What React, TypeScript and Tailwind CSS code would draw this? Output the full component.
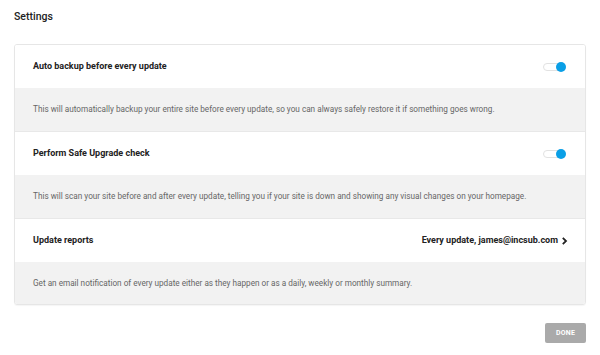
import React from 'react';

interface SettingRow {
    title: string;
    description: string;
    control: 'toggle' | 'link';
    value?: string;
}

const rows: SettingRow[] = [
    {
        title: 'Auto backup before every update',
        description: 'This will automatically backup your entire site before every update, so you can always safely restore it if something goes wrong.',
        control: 'toggle'
    },
    {
        title: 'Perform Safe Upgrade check',
        description: 'This will scan your site before and after every update, telling you if your site is down and showing any visual changes on your homepage.',
        control: 'toggle'
    },
    {
        title: 'Update reports',
        description: 'Get an email notification of every update either as they happen or as a daily, weekly or monthly summary.',
        control: 'link',
        value: 'Every update, james@incsub.com'
    }
];

const Toggle = () => (
    <div className="relative w-[23px] h-[11px] flex items-center">
        <div className="w-[20px] h-[8px] rounded-full bg-white border border-[#e2e2e2]" />
        <div className="absolute right-0 top-[0.5px] w-[10px] h-[10px] rounded-full bg-[#0a9fe6]" />
    </div>
);

export default function App() {
    return (
        <div className="w-[600px] h-[355px] bg-white font-['Roboto',sans-serif] px-[14px] pt-[10px]">
            <h1 className="text-[10.5px] font-medium text-[#222] leading-[14px] pb-[20px]">Settings</h1>
            <div className="border border-[#e6e6e6] rounded-[3px] shadow-[0_1px_1px_rgba(0,0,0,0.04)] overflow-hidden">
                {rows.map((row, idx) => (
                    <div key={idx} className={idx > 0 ? 'border-t border-[#e8e8e8]' : ''}>
                        <div className="h-[43px] flex items-center justify-between pl-[18px] pr-[19px] bg-white pt-[1px]">
                            <span className="text-[9px] font-bold text-[#222]">{row.title}</span>
                            {row.control === 'toggle' ? (
                                <Toggle />
                            ) : (
                                <span className="flex items-center gap-[2px] text-[9px] font-bold text-[#222] -mr-[2px]">
                                    {row.value}
                                    <svg width="7" height="8" viewBox="0 0 7 8" className="ml-[1px]">
                                        <path d="M1.8 0.8 L5 4 L1.8 7.2" fill="none" stroke="#222" strokeWidth="1.8" />
                                    </svg>
                                </span>
                            )}
                        </div>
                        <div className={`${idx === rows.length - 1 ? 'h-[42px]' : 'h-[43px]'} flex items-center pl-[18px] bg-[#f2f2f2]`}>
                            <span className="text-[8.2px] text-[#666]">{row.description}</span>
                        </div>
                    </div>
                ))}
            </div>
            <div className="flex justify-end pt-[18px]">
                <button className="w-[41px] h-[20px] rounded-[2px] bg-[#aaaaaa] text-white text-[7px] font-bold tracking-[0.2px]">
                    DONE
                </button>
            </div>
        </div>
    );
}
